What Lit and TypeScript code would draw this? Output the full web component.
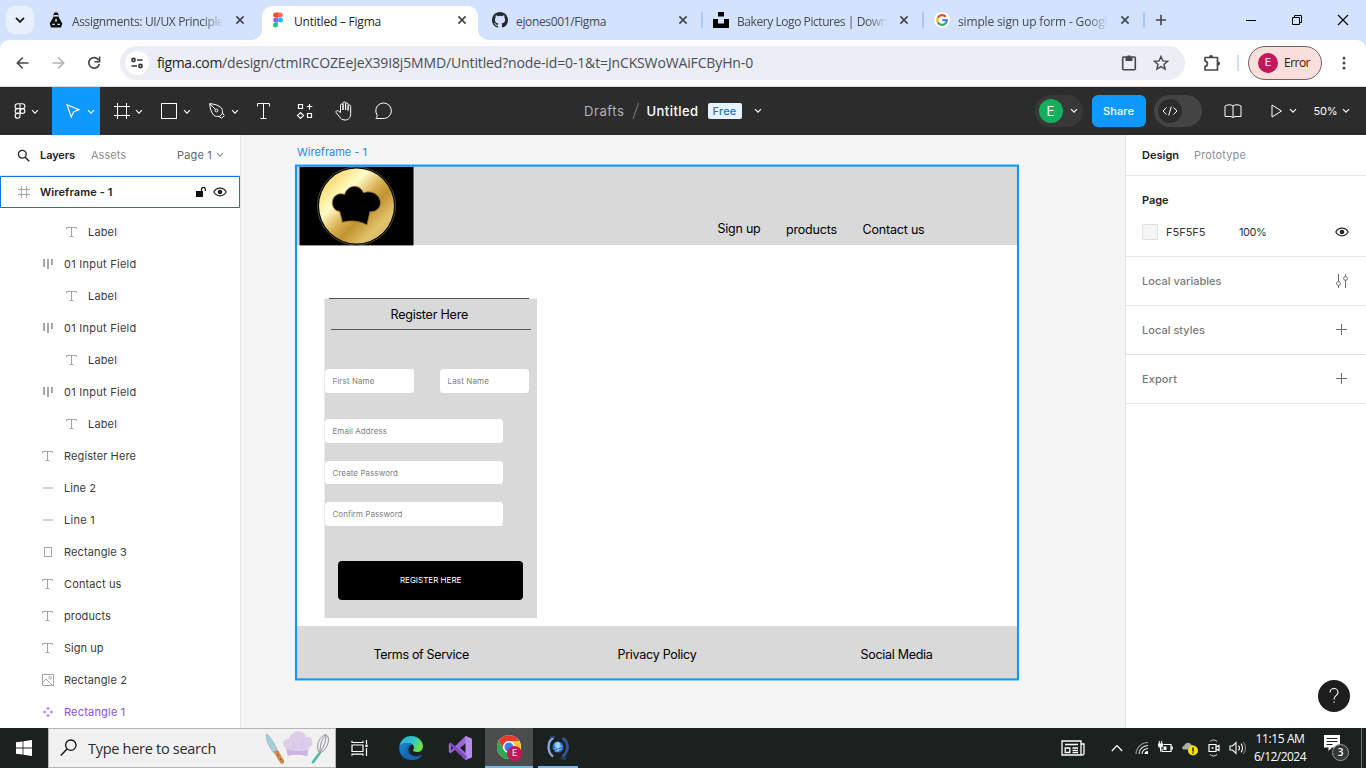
import { LitElement, html, svg, css, nothing } from "lit";
import { customElement, property, state } from "lit/decorators.js";
import { styleMap } from "lit/directives/style-map.js";

/** A line of text whose tracking is adjusted so that it spans the given width. */
@customElement("fit-text")
class FitText extends LitElement {
  @property() text = "";
  @property({ type: Number }) w = 0;
  @state() tracking = 0;

  static styles = css`
    :host { display: block; flex: none; white-space: pre; }
    span { display: inline-block; }
  `;

  firstUpdated() {
    const el = this.renderRoot.querySelector("span")!;
    const natural = el.getBoundingClientRect().width;
    if (this.w && natural) this.tracking = (this.w - natural) / this.text.length;
  }

  render() {
    return html`<span style=${styleMap({ letterSpacing: this.tracking + "px" })}>${this.text}</span>`;
  }
}

const fit = (text: string, w: number, cls = "") =>
  html`<fit-text class=${cls} .text=${text} .w=${w}></fit-text>`;

const icon = (w: number, h: number, body: unknown, cls = "") =>
  html`<svg class="ic ${cls}" width=${w} height=${h} viewBox="0 0 ${w} ${h}" fill="none">${body}</svg>`;

const chev = (cls = "") =>
  icon(8, 6, svg`<path d="M1 1.2 4 4.2 7 1.2" stroke="currentColor" stroke-width="1.1"/>`, cls);

const closeX = icon(16, 16, svg`<path d="M4.4 4.4l7.2 7.2M11.6 4.4l-7.2 7.2" stroke="#45474a" stroke-width="1.7"/>`);

const favicons: Record<string, unknown> = {
  monk: icon(16, 16, svg`<circle cx="8" cy="2.800" r="2.500" fill="#111"/><path d="M5.500 4.500h5l1.500 3 2.300 4-1.300 4H3l-1.300-4 2.300-4z" fill="#111"/><path d="M6 3h4v1.500H6zM7.300 7h1.500v2.800H7.300zM4.300 11.700h2.500v1.300H4.300zM9.400 11.700h2.500v1.300H9.400z" fill="#dfe7f7"/>`),
  figma: icon(16, 16, svg`<path d="M5.700.5H8v5H5.700a2.500 2.500 0 010-5z" fill="#f24e1e"/><path d="M8 .5h2.400a2.500 2.500 0 010 5H8z" fill="#ff7262"/><path d="M5.700 5.500H8v5H5.700a2.500 2.500 0 010-5z" fill="#a259ff"/><circle cx="10.500" cy="8" r="2.500" fill="#1abcfe"/><path d="M5.700 10.500H8V13a2.500 2.500 0 11-2.300-2.500z" fill="#0acf83"/>`),
  github: icon(16, 16, svg`<path fill="#24292f" d="M8 0C3.580 0 0 3.580 0 8c0 3.540 2.290 6.530 5.470 7.590.4.070.550-.170.550-.380 0-.190-.010-.820-.010-1.490-2.010.370-2.530-.490-2.690-.940-.090-.230-.480-.940-.820-1.130-.280-.150-.680-.520-.010-.530.630-.010 1.080.580 1.230.820.720 1.210 1.870.870 2.330.660.070-.520.280-.870.510-1.070-1.780-.2-3.640-.890-3.640-3.950 0-.870.310-1.590.820-2.150-.080-.2-.360-1.020.080-2.120 0 0 .670-.210 2.200.820a7.600 7.600 0 014 0c1.530-1.040 2.200-.820 2.200-.820.440 1.100.160 1.920.080 2.120.510.560.820 1.270.820 2.150 0 3.070-1.870 3.750-3.650 3.950.290.250.540.730.540 1.480 0 1.070-.010 1.930-.010 2.200 0 .210.150.460.550.380A8 8 0 0016 8c0-4.420-3.580-8-8-8z"/>`),
  unsplash: icon(16, 16, svg`<path d="M5 0h6v4.500H5zM0 7h5v4.500h6V7h5v9H0z" fill="#000"/>`),
  google: icon(16, 16, svg`<circle cx="8" cy="8" r="8" fill="#fff"/><g stroke-width="2.200"><path d="M11.700 4.800A4.800 4.800 0 003.800 5.700" stroke="#ea4335"/><path d="M3.800 5.700a4.800 4.800 0 000 4.600" stroke="#fbbc05"/><path d="M3.800 10.300a4.800 4.800 0 007.400 1.300" stroke="#34a853"/><path d="M11.200 11.600A4.800 4.800 0 0012.800 8.200H8.200" stroke="#4285f4"/></g>`),
};

const tabs = [
  { id: "monk", title: "Assignments: UI/UX Principle", w: 151.5, fade: true },
  { id: "figma", title: "Untitled – Figma", w: 87, active: true },
  { id: "github", title: "ejones001/Figma", w: 90 },
  { id: "unsplash", title: "Bakery Logo Pictures | Down", w: 150.5, fade: true },
  { id: "google", title: "simple sign up form - Googl", w: 149.5, fade: true },
];

const grey = "#a6a6a6";
const layerIcons: Record<string, unknown> = {
  text: icon(12, 12, svg`<path d="M.5 3V1.500h10V3M5.500 1.500v9.500M3.500 10.500h4" stroke=${grey}/>`),
  auto: icon(12, 12, svg`<path d="M2 1v8M6 1v10M10 1v6" stroke=${grey} stroke-width="2"/>`),
  line: icon(12, 12, svg`<path d="M1 6h10" stroke="#c9c9c9" stroke-width="1.600"/>`),
  rect: icon(12, 12, svg`<rect x="2.500" y="1.500" width="7" height="9" stroke=${grey}/>`),
  image: icon(12, 12, svg`<rect x=".5" y=".5" width="11" height="11" stroke=${grey}/><circle cx="8.200" cy="3.800" r="1.300" stroke=${grey}/><path d="M1 8l3-3 6.500 6.500" stroke=${grey}/>`),
  comp: icon(12, 12, svg`<path d="M6 .6l2 2-2 2-2-2zM6 7.400l2 2-2 2-2-2zM2.600 4l2 2-2 2-2-2zM9.400 4l2 2-2 2-2-2z" fill="#bba4e0"/>`),
};

const layers: { name: string; kind: string; w: number; nested?: boolean; purple?: boolean }[] = [
  { name: "Label", kind: "text", w: 29, nested: true },
  { name: "01 Input Field", kind: "auto", w: 72.5 },
  { name: "Label", kind: "text", w: 29, nested: true },
  { name: "01 Input Field", kind: "auto", w: 72.5 },
  { name: "Label", kind: "text", w: 29, nested: true },
  { name: "01 Input Field", kind: "auto", w: 72.5 },
  { name: "Label", kind: "text", w: 29, nested: true },
  { name: "Register Here", kind: "text", w: 72 },
  { name: "Line 2", kind: "line", w: 32 },
  { name: "Line 1", kind: "line", w: 31 },
  { name: "Rectangle 3", kind: "rect", w: 63 },
  { name: "Contact us", kind: "text", w: 57.5 },
  { name: "products", kind: "text", w: 47 },
  { name: "Sign up", kind: "text", w: 39.5 },
  { name: "Rectangle 2", kind: "image", w: 63 },
  { name: "Rectangle 1", kind: "comp", w: 61.5, purple: true },
];

const eye = icon(14, 10, svg`<path d="M.8 5C2.200 2.500 4.300 1.200 7 1.200S11.800 2.500 13.200 5C11.800 7.500 9.700 8.800 7 8.800S2.200 7.500.8 5z" stroke="#222" stroke-width="1.200"/><circle cx="7" cy="5" r="2.300" fill="#222"/>`);
const plus = icon(12, 12, svg`<path d="M5.500 0v11M0 5.500h11" stroke="#6b6b6b"/>`);

const tools = {
  logo: icon(12, 16, svg`<g stroke="#fff" stroke-width="1.100"><path d="M6 .8H3.500a2.400 2.400 0 000 4.800H6zM6 .8h2.500a2.400 2.400 0 010 4.800H6zM6 5.600H3.500a2.400 2.400 0 000 4.800H6z"/><circle cx="8.500" cy="8" r="2.400"/><path d="M6 10.400H3.500A2.400 2.400 0 106 12.800z"/></g>`),
  move: icon(16, 16, svg`<path d="M2 1.700l12 5.100-5.200 2-2.600 5.200z" stroke="#fff" stroke-width="1.100"/>`),
  frame: icon(16, 16, svg`<path d="M4.500 0v16M13.500 0v16M1 3.500h16M1 12.500h16" stroke="#fff"/>`),
  rect: icon(16, 16, svg`<rect x=".5" y=".5" width="15" height="15" stroke="#fff"/>`),
  pen: icon(16, 16, svg`<path d="M.7.7C5 1 9.500 2 12.500 5c1.500 1.700.6 3.700 1 5l1.700 2.600-2.600 2.600L10 13.500c-1.300-.4-3.300.5-5-1C2 9.500 1 5 .7.7zM.7.7l6 6M10.300 13.500l3.600-3.500" stroke="#fff"/><circle cx="7.500" cy="7.500" r="1.400" stroke="#fff"/>`),
  text: icon(14, 16, svg`<path d="M.5 3.500v-3h12v3M6.500 .5v15M3.500 15.500h6" stroke="#fff"/>`),
  resources: icon(16, 16, svg`<path d="M2.500 1.500h4v4h-4zM11.500 10.500h4v4h-4zM4.500 9.500l3 3-3 3-3-3zM13.500 1v5.500M10.800 3.500h5.500" stroke="#fff" stroke-width="1.200"/>`),
  hand: icon(18, 20, svg`<path d="M5.500 11.500V4.300c0-1.900 2.500-1.900 2.500 0V9 2.300c0-1.900 2.600-1.900 2.600 0V9 3.300c0-1.800 2.500-1.800 2.500 0v6.200-4.200c0-1.700 2.600-1.700 2.600 0v7.200c0 4-2 6.500-5.700 6.500-3 0-4.500-1.500-5.700-3.500L1.200 11.700c-1-1.700 1-2.700 2.200-1.600z" stroke="#fff"/>`),
  comment: icon(18, 18, svg`<path d="M1 16.500c1-1.200 1.200-2 1.100-3.400A7.800 7.800 0 119.500 16.500z" stroke="#fff"/>`),
  book: icon(18, 14, svg`<path d="M1 12.500V2C3 .5 7 .2 9 2c2-1.800 6-1.500 8 0v10.500H11L9 13.500l-2-1zM9 2v11" stroke="#fff"/>`),
  play: icon(12, 14, svg`<path d="M1 1l9.500 6L1 13z" stroke="#fff"/>`),
};

const task = {
  start: icon(16, 16, svg`<path d="M0 2.300l6.600-.9v6.200H0zM7.400 1.300L16 0v7.600H7.400zM0 8.400h6.600v6.200L0 13.700zM7.400 8.400H16V16l-8.600-1.300z" fill="#fff"/>`),
  search: icon(18, 18, svg`<circle cx="10.800" cy="6.200" r="5.200" stroke="#111" stroke-width="1.300"/><path d="M7 10L.8 16.500" stroke="#111" stroke-width="1.400"/>`),
  chef: html`<svg class="ic" width="66" height="36" viewBox="0 0 66 36" fill="none">
    <path d="M1.500 4C5 6 10 14 12.500 21l-4 1.500C5 18 .5 11 1.500 4z" fill="#a9cfdf" stroke="#7ba9bd" stroke-width=".6"/>
    <path d="M8.500 21.500l4.500-1.300 6 10.300c1 3-2.500 4.500-4 2z" fill="#d5864a"/><circle cx="13" cy="25" r=".7" fill="#7a451e"/><circle cx="15.500" cy="29.500" r=".7" fill="#7a451e"/>
    <path d="M21 18c-5-3-3-10 3-9 2-9 15-10 17-2 7-2 9 9 2.500 11l-2 8c-6-1.500-13-2-19 0z" fill="#dccdeb"/>
    <path d="M21.500 19c7 2.500 15 3 22 .5l-1.200 6.500c-6-1.500-13-2-19.300-.2z" fill="#c9b5dd"/><path d="M27 11c2 2 2 5 2 7M39 10c-2 3-2 5-2 8" stroke="#cfbde3"/>
    <path d="M54 22c-4-7 1-16 7-17.500 5 3 2 14-5 18zM55 22c0-8 2-13 6-17M55 22c4-5 6-11 6-17" stroke="#8f8f96" stroke-width="1"/>
    <path d="M54 22l2 1.500-7 9.500c-1.500 1-3 0-2-1.800z" fill="#55b5a6"/></svg>`,
  view: icon(18, 18, svg`<path d="M1 1.700V3.500h11V1.700M1 16.800v-1.600h11v1.600M1 6h11v6.500H1zM15.500 1v4M15.500 9v8" stroke="#fff" stroke-width="1.200"/><rect x="14.400" y="5.500" width="2.300" height="2.500" fill="#fff"/>`),
  edge: html`<svg class="ic" width="24" height="24" viewBox="0 0 24 24" fill="none">
    <defs><linearGradient id="eg" x1="0" y1="0" x2="1" y2=".4"><stop stop-color="#27a7e0"/><stop offset=".6" stop-color="#2fc3cf"/><stop offset="1" stop-color="#6fe04c"/></linearGradient>
    <linearGradient id="eb" x1="0" y1="0" x2="1" y2="1"><stop stop-color="#1a86d0"/><stop offset="1" stop-color="#1155a0"/></linearGradient></defs>
    <path d="M.3 11C1 4.500 6 0 12 0c7 0 12 5 12 10.500 0 3.500-2.800 5.500-6 5.500-2.500 0-4-.8-4-1.500s1-1.200 1-3C15 9 12.500 7 9 7 4.500 7 1.500 9 .3 11z" fill="url(#eg)"/>
    <path d="M.3 11C1.500 8.800 5 7 9 7c2 0 3.500.6 4.500 1.600C9 8.500 7.500 12 7.500 14c0 5 4.500 8 8.500 8 1 0 2-.3 2.700-.6C17 23 14.500 24 12 24 5 24-.5 18 .3 11z" fill="url(#eb)"/>
    <path d="M13.500 8.600c-3 1-4 3.400-4 5.400 0 4 4 6.500 8 6.300 2-.1 3.500-.9 4.500-1.400.5-.3.8.2.6.6-2 3.200-5 4.500-8 4.300C9 23.500 6 19 6.500 14.500 7 10.500 10 8 13.500 8.600z" fill="#1766b5"/></svg>`,
  vs: html`<svg class="ic" width="25" height="24" viewBox="0 0 25 24"><path d="M17.500 0l6.500 2.700v18.600L17.500 24 7 13.800 2.700 17.200.8 16.200V7.800l1.900-1L7 10.200zM18 7l-6 5 6 5zM3 9.500v5L5.500 12z" fill="#9a68d4" fill-rule="evenodd"/><path d="M17.500 0L24 2.700v18.600L17.500 24z" fill="#b78aec"/><path d="M.8 7.800l1.900-1L19 20.500 17.500 24 7 13.800z" fill="#7d4cc0"/></svg>`,
  chrome: html`<svg class="ic" width="24" height="26" viewBox="0 0 24 26"><circle cx="12" cy="12" r="12" fill="#fff"/>
    <path d="M1.600 6A12 12 0 0122.400 6H12a6 6 0 00-5.200 9z" fill="#e33b2e"/>
    <path d="M1.600 6A12 12 0 0012 24l5.200-9A6 6 0 016.800 15z" fill="#2da94f"/>
    <path d="M22.400 6A12 12 0 0112 24l5.200-9A6 6 0 0012 6z" fill="#fcc934"/>
    <circle cx="12" cy="12" r="5.700" fill="#fff"/><circle cx="12" cy="12" r="4.500" fill="#3b7ded"/></svg>`,
  orb: html`<svg class="ic" width="24" height="26" viewBox="0 0 24 26" fill="none"><circle cx="12" cy="12" r="5.500" fill="#2471c9"/><circle cx="11.500" cy="10" r="3" fill="#8cc6f4"/><path d="M8 14l8-3M9 16.500l7-3M12 6.500v10.500" stroke="#bfe0fa" stroke-width=".7"/><path d="M7.500 3C1 6 1 17 7 21.500" stroke="#8da9d8" stroke-width="2.300"/><path d="M16.500 3C23 7 23 17 16.500 21.500" stroke="#34539c" stroke-width="2.800"/><path d="M4 2h5M15 23.500h5" stroke="#27427f" stroke-width="2"/></svg>`,
};

const tray = {
  news: icon(24, 16, svg`<g stroke="#fff" stroke-width="1.300"><path d="M1 1h19v14H1zM20 4h3v9.500c0 2-3 2-3 0"/><path d="M4 4.500h13M11.500 8H17M11.500 10.300H17M11.500 12.500H17"/><path d="M4.200 8h4.600v4.500H4.200z"/></g>`),
  up: icon(12, 8, svg`<path d="M.8 7L6 1.600 11.200 7" stroke="#fff" stroke-width="1.300"/>`),
  wifi: icon(14, 14, svg`<g stroke="#e8e8e8" stroke-width="1.100"><path d="M1 13C1.300 6.500 6.500 1.500 13 1.500" stroke="#9a9d9c"/><path d="M4 13c.3-5 4-8.300 9-8.500M7 13c.2-3 2.500-5.300 6-5.500"/></g><path d="M9.500 13c0-2 1.500-3 3.500-3v3z" fill="#fff"/>`),
  battery: icon(16, 14, svg`<path d="M6.500 3.500h7.500v7H5v-3M15.300 5.500v3" stroke="#fff" stroke-width="1.200"/><path d="M6.500 5.500h3v3.500h-3zM1 2.500h5v1.800a2.500 2.500 0 01-5 0z" fill="#fff"/><path d="M2.300 0v3M4.700 0v3M3.500 6v4.500" stroke="#fff" stroke-width="1"/>`),
  cloud: html`<svg class="ic" width="18" height="16" viewBox="0 0 18 16"><path d="M3 9.500C.8 9.500.5 6 3.200 5.700 4 2 9 1.500 10.500 5c3 0 4 4 1 4.500z" fill="#a9adac"/><circle cx="12" cy="10.500" r="5" fill="#fce100"/><path d="M12 7.500v4M12 12.500v1.200" stroke="#111" stroke-width="1.400"/></svg>`,
  cam: icon(14, 18, svg`<path d="M3 2.500c2-2 5-2 7 0M3 15.500c2 2 5 2 7 0" stroke="#ddd"/><path d="M2 5.500h7v7H2zM9 8l3-1.500v5L9 10" stroke="#fff" stroke-width="1.200"/><circle cx="5.500" cy="9" r="1" fill="#fff"/>`),
  vol: icon(18, 14, svg`<path d="M1 5h2.500L7 1.500v11L3.500 9H1zM9.500 4.500c1.200 1.400 1.200 3.600 0 5M12 2.700c2 2.300 2 6.300 0 8.600" stroke="#fff" stroke-width="1.100"/><path d="M14.200 1c3 3.300 3 8.700 0 12" stroke="#999"/>`),
};

@customElement("app-root")
class AppRoot extends LitElement {
  static styles = css`
    :host { display: flex; flex-direction: column; width: 1366px; height: 768px; overflow: hidden; background: #fff; color: #333; font: 11px "Inter", sans-serif; }
    * { box-sizing: border-box; }
    .ic { display: block; flex: none; overflow: visible; }
    .segoe { font-family: "Open Sans", "Noto Sans", sans-serif; }

    .tabstrip { flex: none; height: 40px; background: #d3e2fd; display: flex; align-items: flex-start; padding-left: 6px; }
    .tabmenu { flex: none; width: 28px; height: 28px; margin: 6px 6px 0 0; border-radius: 9px; background: #e9f1fe; display: flex; align-items: center; justify-content: center; }
    .tab { flex: none; width: 216px; height: 34px; margin-top: 6px; padding: 0 8px 6px; display: flex; align-items: center; gap: 8px; font-size: 12px; color: #474a4f; position: relative; }
    .tab.late { width: 215px; }
    .tab > .title { flex: 1; display: flex; height: 20px; align-items: center; margin-top: 2px; }
    .fade > .title { mask-image: linear-gradient(to right, #000 86%, transparent); }
    .sep { flex: none; width: 6px; height: 16px; margin-top: 12px; display: flex; justify-content: center; }
    .sep i { width: 2px; border-radius: 1px; background: #a8c7fa; }
    .sep.hid i { background: none; }
    .active { background: #fff; border-radius: 10px 10px 0 0; color: #1f1f1f; }
    .active::before, .active::after { content: ""; position: absolute; bottom: 0; width: 10px; height: 10px; }
    .active::before { left: -10px; background: radial-gradient(circle at 0 0, transparent 9.5px, #fff 10px); }
    .active::after { right: -10px; background: radial-gradient(circle at 100% 0, transparent 9.5px, #fff 10px); }
    .newtab { margin: 13px 0 0 7px; }
    .wins { margin: 12px 15px 0 auto; display: flex; gap: 30px; }

    .addr { flex: none; height: 47px; background: #d3e2fd; }
    .addr-in { height: 47px; background: #fff; border-radius: 9px 9px 0 0; border-bottom: 1px solid #d9dbe0; display: flex; align-items: center; padding-left: 15px; }
    .addr-in > .nav { margin-right: 20px; }
    .omni { width: 1065px; height: 34px; margin-left: -3px; border-radius: 17px; background: #ebeef7; display: flex; align-items: center; padding: 0 16px 0 5px; font-size: 14px; color: #4a4d52; }
    .omni fit-text { margin-top: -2px; }
    .site { width: 24px; height: 24px; border-radius: 50%; background: #fff; display: flex; align-items: center; justify-content: center; margin-right: 8px; }
    .host { color: #1f1f1f; }
    .omni .clip { margin-left: auto; margin-right: 16px; }
    .puzzle { margin: 0 16px 0 18px; }
    .vsep { width: 2px; height: 16px; background: #cfe0fc; margin-right: 9px; }
    .chip { width: 74px; height: 34px; border: 1px solid #6d6664; border-radius: 17px; background: #f9dedc; display: flex; align-items: center; padding-left: 9px; gap: 6px; font-size: 12px; color: #410e0b; }
    .chip b { width: 20px; height: 20px; border-radius: 50%; background: #c2185b; color: #fff; font: 11px/20px Roboto, sans-serif; text-align: center; }
    .chip fit-text { margin-top: -1px; }
    .dots { margin-left: 14px; }

    .bar { flex: none; height: 48px; background: #2c2c2c; color: #fff; display: flex; align-items: center; }
    .bar .cell { width: 48px; height: 48px; display: flex; align-items: center; padding-left: 13px; }
    .bar .cell .ic:last-child { margin-left: 6px; margin-top: 1px; }
    .bar .cell.logo { width: 52px; padding-left: 14px; }
    .bar .cell.logo .ic:last-child { margin-left: 5px; }
    .bar .cell.sel { background: #0d99ff; }
    .bar .one { width: 40px; display: flex; justify-content: center; }
    .crumb { display: flex; align-items: center; margin-left: 180px; font-size: 13px; font-weight: 500; }
    .drafts { color: #b3b3b3; font-weight: 400; }
    .free { margin: 0 12px 0 9px; width: 34px; height: 16px; border-radius: 2px; background: #e5f4ff; color: #1477d4; font-weight: 500; font-size: 11px; display: flex; align-items: center; justify-content: center; }
    .who { width: 48px; height: 32px; border-radius: 16px; background: #383838; display: flex; align-items: center; padding-left: 4px; gap: 7px; margin-left: 273px; }
    .who b { width: 24px; height: 24px; border-radius: 50%; background: #14ae5c; font: 13px/24px Inter, sans-serif; text-align: center; }
    .share { width: 54px; height: 32px; border-radius: 6px; background: #0d99ff; font-weight: 500; margin: 0 8px 0 9px; display: flex; align-items: center; justify-content: center; }
    .toggle { width: 48px; height: 32px; border-radius: 16px; background: #444; padding: 4px; }
    .toggle div { width: 24px; height: 24px; border-radius: 50%; background: #2c2c2c; display: flex; align-items: center; justify-content: center; }
    .book { margin: 0 29px 0 22px; }
    .pc { margin: 0 17px 0 6px; }
    .zc { margin-left: 4px; }

    .main { flex: 1; min-height: 0; display: flex; }
    .left { width: 241px; border-right: 1px solid #e5e5e5; background: #fff; }
    .lt { height: 41px; border-bottom: 1px solid #e5e5e5; display: flex; align-items: center; padding-left: 17px; }
    .strong { font-weight: 600; color: #222; }
    .mute { color: #8f8f8f; }
    .gap { margin-right: 16px; }
    .pg { margin-left: 51px; margin-right: 4px; color: #666; }
    .frame-row { height: 32px; width: 240px; border: 1px solid #0d78dd; display: flex; align-items: center; padding-left: 17px; margin-bottom: 8px; }
    .hash { margin-right: 10px; }
    .lock { margin-left: 82px; margin-right: 7px; }
    .row { height: 32px; display: flex; align-items: center; padding-left: 42px; gap: 10px; color: #3a3a3a; }
    .row.nested { padding-left: 66px; }
    .row.purple { color: #8a4fe0; }
    .canvas { flex: 1; background: #f5f5f5; position: relative; overflow: hidden; color: #111; }
    .obj { position: absolute; display: flex; align-items: center; }
    .wf { color: #1a8cec; }
    .paper { background: #fff; }
    .rule { background: #555; }
    .g { background: #d9d9d9; }
    .big { font-size: 12.5px; color: #000; }
    .field { background: #fff; border-radius: 3.5px; padding-left: 7.5px; font-size: 8px; color: #808080; }
    .cta { background: #000; border-radius: 4px; color: #fff; font-size: 8px; justify-content: center; padding-bottom: 1px; }
    .right { width: 241px; border-left: 1px solid #e5e5e5; background: #fff; position: relative; }
    .rt { height: 41px; padding-left: 16px; border-bottom: 1px solid #e5e5e5; display: flex; align-items: center; gap: 15px; }
    .sec { height: 49px; padding: 0 18px 0 16px; border-bottom: 1px solid #e5e5e5; display: flex; align-items: center; justify-content: space-between; color: #7a7a7a; font-weight: 500; }
    .page { height: 81px; border-bottom: 1px solid #e5e5e5; padding: 16px 17px 0 16px; }
    .page .fill { display: flex; align-items: center; height: 32px; margin-top: 8px; }
    .page .strong { height: 16px; line-height: 16px; }
    .swatch { width: 16px; height: 16px; background: #f5f5f5; border: 1px solid #e2e2e2; margin-right: 8px; }
    .opac { margin-left: 33.5px; }
    .fill .ic { margin-left: auto; }
    .help { position: absolute; right: 16px; bottom: 16px; width: 32px; height: 32px; border-radius: 50%; background: #1e1e1e; display: flex; align-items: center; justify-content: center; }

    .taskbar { flex: none; height: 40px; background: #1b211f; display: flex; align-items: center; color: #fff; }
    .start { width: 48px; display: flex; justify-content: center; }
    .find { width: 288px; height: 40px; background: #f1f1f1; border: 1px solid #b5b5b5; display: flex; align-items: center; padding-left: 11px; font-size: 14.5px; color: #2b2b2b; }
    .find fit-text { margin-left: 10px; }
    .find > .ic:last-child { margin-left: 49px; }
    .app { height: 40px; width: 48px; display: flex; align-items: center; justify-content: center; position: relative; margin-left: 1px; }
    .app.first { margin: 0 2px 0 0; }
    .app.on { background: #4a4e4d; }
    .app.on::after, .app.run::after { content: ""; position: absolute; left: 0; right: 0; bottom: 0; height: 2px; background: #76b9ed; }
    .app.run::after { left: 4px; right: 4px; }
    .badge { position: absolute; left: 22px; top: 18px; width: 15px; height: 15px; border-radius: 50%; background: #c2185b; font: 9px/15px Roboto, sans-serif; text-align: center; }
    .tray { margin-left: auto; display: flex; align-items: center; }
    .icons { display: flex; align-items: center; gap: 8px; }
    .icons.wide { gap: 26px; margin-right: 12px; }
    .clock { width: 54px; margin-left: 6px; display: flex; flex-direction: column; align-items: center; font-size: 12px; line-height: 18px; }
    .note { margin-left: 17px; width: 26px; height: 26px; position: relative; }
    .num { position: absolute; left: 8px; top: 9px; width: 17px; height: 17px; border-radius: 50%; border: 1px solid #9a9d9c; background: #343938; text-align: center; font: 600 10px/15px "Open Sans", sans-serif; }
    .edge { width: 5px; height: 40px; border-left: 1px solid #6d7170; margin-left: 11px; }
  `;

  private obj(x: number, y: number, w: number, h: number, cls: string, body: unknown = nothing) {
    const pos = styleMap({ left: x - 241 + "px", top: y - 135 + "px", width: w + "px", height: h + "px" });
    return html`<div class="obj ${cls}" style=${pos}>${body}</div>`;
  }

  private chrome() {
    return html`
      <div class="tabstrip segoe">
        <div class="tabmenu">${icon(10, 8, svg`<path d="M1 1.800l4 4 4-4" stroke="#1f1f1f" stroke-width="1.900"/>`)}</div>
        ${tabs.map((t, i) => html`
          <div class="tab ${t.active ? "active" : ""} ${t.fade ? "fade" : ""} ${i > 1 ? "late" : ""}">${favicons[t.id]}<div class="title">${fit(t.title, t.w)}</div>${closeX}</div>
          <div class="sep ${i < 2 ? "hid" : ""}"><i></i></div>`)}
        <div class="newtab">${icon(14, 14, svg`<path d="M7 1.800v10.400M1.800 7h10.400" stroke="#45474a" stroke-width="1.600"/>`)}</div>
        <div class="wins">
          ${icon(16, 16, svg`<path d="M3 8.500h10" stroke="#000"/>`)}
          ${icon(16, 16, svg`<path d="M3.500 5.500h7v7h-7zM5.500 5.500v-2h7v7h-2" stroke="#000"/>`)}
          ${icon(16, 16, svg`<path d="M3 3l10 10M13 3L3 13" stroke="#000" stroke-width="1.100"/>`)}
        </div>
      </div>
      <div class="addr segoe"><div class="addr-in">
        ${icon(16, 16, svg`<path d="M13.500 8H2.500M7.800 2.500L2.300 8l5.500 5.500" stroke="#45474a" stroke-width="1.600"/>`, "nav")}
        ${icon(16, 16, svg`<path d="M1.500 8h11M7.200 2.500L12.700 8l-5.500 5.500" stroke="#b0b2b6" stroke-width="1.600"/>`, "nav")}
        ${icon(16, 16, svg`<path d="M11.700 5.200A5.300 5.300 0 1012.300 9" stroke="#45474a" stroke-width="1.700"/><path d="M12.600 1.500v5.200H7.400" stroke="#45474a" stroke-width="1.600"/>`, "nav")}
        <div class="omni">
          <div class="site">${icon(14, 12, svg`<g stroke="#333" stroke-width="1.600"><circle cx="3.500" cy="3" r="1.600"/><path d="M7 3h5.500M1.500 9H7"/><circle cx="10.500" cy="9" r="1.600"/></g>`)}</div>
          ${fit("figma.com", 65, "host")}${fit("/design/ctmIRCOZEeJeX39I8j5MMD/Untitled?node-id=0-1&t=JnCKSWoWAiFCByHn-0", 531)}
          ${icon(16, 16, svg`<rect x="1.700" y="2" width="12.600" height="12.800" rx="1" stroke="#45474a" stroke-width="1.600"/><path d="M4.500 2h7v4h-7zM6.500.5h3v2h-3z" fill="#45474a"/>`, "clip")}
          ${icon(16, 16, svg`<path d="M8 1.500l1.900 4.400 4.700.4-3.600 3.100 1.100 4.700L8 11.600l-4.100 2.500L5 9.400 1.400 6.300l4.700-.4z" stroke="#45474a" stroke-width="1.400"/>`)}
        </div>
        <div class="puzzle">${icon(18, 18, svg`<path d="M2 3.500h12.500V16H2v-3.600c3.200-.3 3.200-5 0-5.300z" stroke="#45474a" stroke-width="1.700" stroke-linejoin="round"/><path d="M6 3a2.100 2.100 0 014.200 0zM15 7.500a2.100 2.100 0 010 4.200z" fill="#45474a"/>`)}</div>
        <div class="vsep"></div>
        <div class="chip"><b>E</b>${fit("Error", 26)}</div>
        ${icon(16, 16, svg`<g fill="#45474a"><circle cx="8" cy="3" r="1.500"/><circle cx="8" cy="8" r="1.500"/><circle cx="8" cy="13" r="1.500"/></g>`, "dots")}
      </div></div>`;
  }

  private toolbar() {
    return html`<div class="bar">
      <div class="cell logo">${tools.logo}${chev()}</div>
      <div class="cell sel">${tools.move}${chev()}</div>
      <div class="cell">${tools.frame}${chev()}</div>
      <div class="cell">${tools.rect}${chev()}</div>
      <div class="cell">${tools.pen}${chev()}</div>
      <div class="one">${tools.text}</div><div class="one">${tools.resources}</div><div class="one">${tools.hand}</div><div class="one">${tools.comment}</div>
      <div class="crumb">${fit("Drafts", 40.5, "drafts")}
        ${icon(22, 18, svg`<path d="M13.500 1L8 17" stroke="#6e6e6e" stroke-width="1.200"/>`)}
        ${fit("Untitled", 52)}<div class="free">${fit("Free", 24)}</div>${chev()}</div>
      <div class="who"><b>E</b>${chev()}</div>
      <div class="share">${fit("Share", 31)}</div>
      <div class="toggle"><div>${icon(16, 12, svg`<path d="M4.500 2.500L1 6l3.500 3.500M11.500 2.500L15 6l-3.500 3.500M9.300 1.500l-2.600 9" stroke="#fff"/>`)}</div></div>
      <div class="book">${tools.book}</div>${tools.play}${chev("pc")}${fit("50%", 24)}${chev("zc")}
    </div>`;
  }

  private board() {
    return html`<div class="canvas">
      ${this.obj(297, 145, 80, 14, "", html`<span class="wf">${fit("Wireframe - 1", 70)}</span>`)}
      ${this.obj(297, 166, 720, 513, "paper")}
      ${this.obj(297, 166, 720, 79.4, "g")}
      ${this.obj(299, 166, 115, 80, "", html`<svg class="ic" width="115" height="80" viewBox="0 0 115 80">
        <defs><linearGradient id="gold" x1=".1" y1=".1" x2=".9" y2=".9"><stop offset="0" stop-color="#f0d36c"/><stop offset=".12" stop-color="#fbe58a"/><stop offset=".3" stop-color="#fffbc8"/><stop offset=".5" stop-color="#d9b154"/><stop offset=".64" stop-color="#c1922f"/><stop offset=".85" stop-color="#e3c370"/><stop offset="1" stop-color="#d9b65e"/></linearGradient></defs>
        <rect x=".5" y=".8" width="114" height="78.600" fill="#000"/><circle cx="57.500" cy="40" r="39" fill="none" stroke="#5c5a48" stroke-width=".8"/>
        <circle cx="57.500" cy="40" r="37.500" fill="url(#gold)"/>
        <path d="M43.500 56.500L40.700 45.500C34 45 32 37 34 33c2-4.500 7-6.500 11.500-4.500C47.500 22 53 20 56 20.300c4 .3 7 2.700 8.500 6.500 8-3.300 17 2 17 10.200 0 5-5 9.500-10.500 8.700L68 59c-8-4.500-17-5-24.500-2.500z" fill="#000" stroke="#a9802e" stroke-width=".8"/></svg>`)}
      ${this.obj(717.5, 219, 60, 18, "big", fit("Sign up", 43))}
      ${this.obj(786, 220, 60, 18, "big", fit("products", 51))}
      ${this.obj(862.5, 220, 70, 18, "big", fit("Contact us", 62))}
      ${this.obj(324, 298, 213, 320, "", html`<svg class="ic" width="213" height="320"><rect x=".5" y=".5" width="212.500" height="319.500" fill="#d9d9d9"/></svg>`)}
      ${this.obj(329, 298, 200, 1, "rule")}
      ${this.obj(331, 329, 200, 1, "rule")}
      ${this.obj(390.5, 305, 90, 18, "big", fit("Register Here", 77.5))}
      ${this.obj(325, 369, 88.7, 23.5, "field", fit("First Name", 42))}
      ${this.obj(440, 369, 88.7, 23.5, "field", fit("Last Name", 41.5))}
      ${this.obj(325, 419.3, 178, 23.5, "field", fit("Email Address", 54.5))}
      ${this.obj(325, 460.8, 178, 23.5, "field", fit("Create Password", 65.5))}
      ${this.obj(325, 502.3, 178, 23.5, "field", fit("Confirm Password", 70))}
      ${this.obj(338.3, 561, 184.7, 39, "cta", fit("REGISTER HERE", 61.5))}
      ${this.obj(297, 626, 720, 53, "g")}
      ${this.obj(373.5, 645, 110, 18, "big", fit("Terms of Service", 95.5))}
      ${this.obj(617.5, 645, 90, 18, "big", fit("Privacy Policy", 79))}
      ${this.obj(860.5, 645, 90, 18, "big", fit("Social Media", 72))}
      ${this.obj(294, 163, 726, 519, "", html`<svg class="ic" width="726" height="519" fill="none"><rect x="2" y="2.600" width="722" height="513.800" stroke="#0d99ff" stroke-width="2.100"/></svg>`)}
    </div>`;
  }

  render() {
    return html`
      ${this.chrome()}${this.toolbar()}
      <div class="main">
        <div class="left">
          <div class="lt">
            ${icon(13, 13, svg`<circle cx="5.300" cy="5.300" r="3.900" stroke="#222" stroke-width="1.300"/><path d="M8.200 8.200l4 4" stroke="#222" stroke-width="1.500"/>`, "hash")}
            ${fit("Layers", 35, "strong gap")}${fit("Assets", 35, "mute")}
            <div class="pg">${fit("Page 1", 35)}</div>${chev("mute")}
          </div>
          <div class="frame-row">
            ${icon(12, 12, svg`<path d="M3.500 0v12M8.500 0v12M0 3.500h12M0 8.500h12" stroke="#a6a6a6"/>`, "hash")}
            ${fit("Wireframe - 1", 72.5, "strong")}
            ${icon(11, 12, svg`<rect x="1" y="5" width="7" height="6" fill="#111"/><path d="M6.500 5V3.300a1.900 1.900 0 013.800 0V5" stroke="#111" stroke-width="1.200"/>`, "lock")}
            ${eye}
          </div>
          ${layers.map((l) => html`<div class="row ${l.nested ? "nested" : ""} ${l.purple ? "purple" : ""}">${layerIcons[l.kind]}${fit(l.name, l.w)}</div>`)}
        </div>
        ${this.board()}
        <div class="right">
          <div class="rt">${fit("Design", 37, "strong")}${fit("Prototype", 52, "mute")}</div>
          <div class="page">
            ${fit("Page", 26.5, "strong")}
            <div class="fill"><div class="swatch"></div>${fit("F5F5F5", 39.5)}<div class="opac">${fit("100%", 27.5)}</div>${eye}</div>
          </div>
          <div class="sec">${fit("Local variables", 79.5)}${icon(12, 14, svg`<g stroke="#6b6b6b"><path d="M2.500 0v7.500M2.500 11.500V14M9.500 0v2.500M9.500 6.500V14"/><circle cx="2.500" cy="9.500" r="1.900"/><circle cx="9.500" cy="4.500" r="1.900"/></g>`)}</div>
          <div class="sec">${fit("Local styles", 63)}${plus}</div>
          <div class="sec">${fit("Export", 35)}${plus}</div>
          <div class="help">${icon(10, 16, svg`<path d="M1 4.500a4 4 0 118 0C9 7.500 5 7.500 5 11.500M5 13.500v1.200" stroke="#fff" stroke-width="1.100"/>`)}</div>
        </div>
      </div>
      <div class="taskbar segoe">
        <div class="start">${task.start}</div>
        <div class="find">${task.search}${fit("Type here to search", 128)}${task.chef}</div>
        <div class="app first">${task.view}</div>
        <div class="app">${task.edge}</div>
        <div class="app">${task.vs}</div>
        <div class="app on">${task.chrome}<div class="badge">E</div></div>
        <div class="app run">${task.orb}</div>
        <div class="tray">
          <div class="icons wide">${tray.news}${tray.up}</div>
          <div class="icons">${tray.wifi}${tray.battery}${tray.cloud}${tray.cam}${tray.vol}</div>
          <div class="clock">${fit("11:15 AM", 49)}${fit("6/12/2024", 52)}</div>
          <div class="note">${icon(16, 16, svg`<path d="M0 0h16v12.500H8L4.500 16v-3.500H0z" fill="#fff"/><path d="M2.500 3.500h11M2.500 6.500h11M2.500 9.500h6" stroke="#1b211f" stroke-width="1.200"/>`)}<div class="num">3</div></div>
          <div class="edge"></div>
        </div>
      </div>`;
  }
}
